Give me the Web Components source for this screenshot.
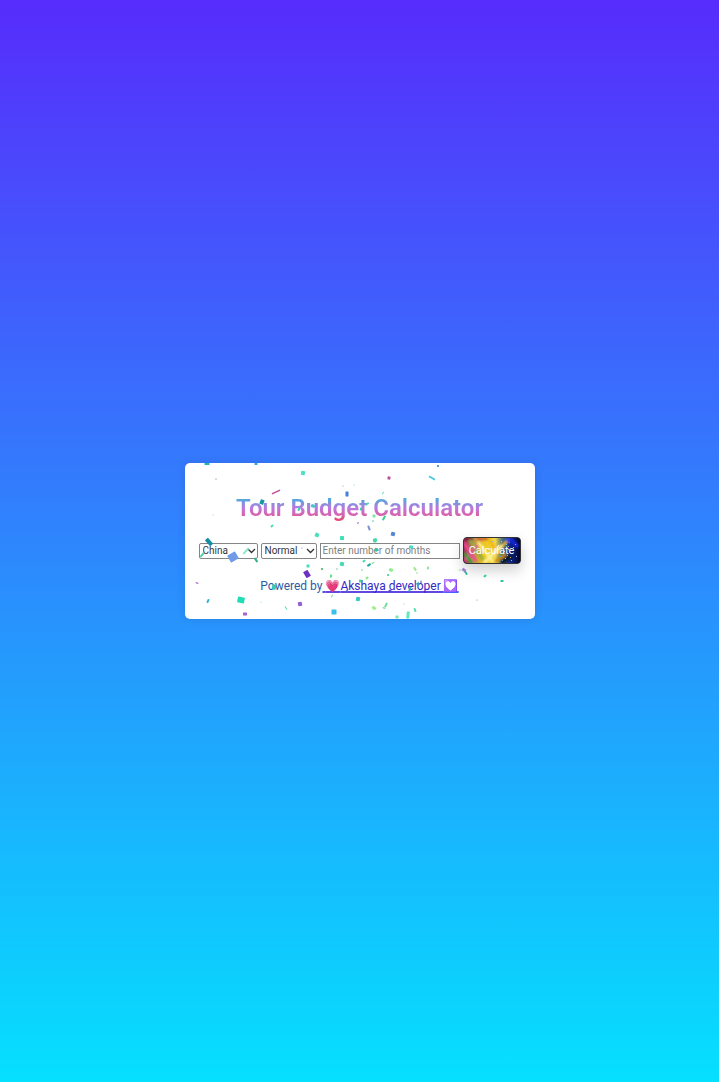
<!DOCTYPE html>
<html lang="en">
<head>
<meta charset="utf-8">
<meta name="viewport" content="width=device-width, initial-scale=1">
<title>Tour Budget Calculator</title>
<style>
html { height: 100%; }
body { margin: 0; min-height: 100%; display: flex; align-items: center; justify-content: center; background: linear-gradient(#572cfc, #05e0fe); font-family: Roboto, "Liberation Sans", sans-serif; }
</style>
</head>
<body>
<tour-card>
  <tour-title slot="title">Tour Budget Calculator</tour-title>
  <tour-form></tour-form>
  <tour-credit slot="footer"></tour-credit>
</tour-card>
<script>
const define = (name, html, setup) => customElements.define(name, class extends HTMLElement {
  constructor() {
    super();
    this.attachShadow({ mode: "open" }).innerHTML = html;
    if (setup) setup(this.shadowRoot);
  }
});

define("tour-title", `
<style>
:host { display: block; }
h1 { margin: 0; font-size: 24px; line-height: 28px; font-weight: 600; text-align: center; color: transparent; background: linear-gradient(#1fc0f2 0%, #5ba4dc 22%, #bd78e0 50%, #d663ae 75%, #e8405c 100%); -webkit-background-clip: text; background-clip: text; }
</style>
<h1><slot></slot></h1>`);

define("tour-form", `
<style>
:host { display: block; }
form { display: flex; align-items: center; justify-content: center; gap: 3px; margin: 0; }
select, input { box-sizing: border-box; margin: 0; font: 10px/13px Roboto, sans-serif; border: 1px solid #858585; background: #fff; height: 16px; }
.pick { display: flex; position: relative; }
select { appearance: none; width: 56px; padding: 0 12px 0 3px; color: #333; border-radius: 2px; }
.pick.wide select { width: 59px; }
.pick svg { position: absolute; right: 2px; top: 5px; width: 9px; height: 6px; pointer-events: none; }
input { width: 140px; padding: 0 2px; border-radius: 0; }
input::placeholder { color: #808080; opacity: 1; }
button { position: relative; overflow: visible; box-sizing: border-box; width: 58px; height: 27px; margin: 0; padding: 0; border: 1px solid #333; border-radius: 4px; font: 11px/13px Roboto, sans-serif; color: #fff; background: #060b40; box-shadow: 0 6px 14px rgba(0,0,0,.2); }
button svg { position: absolute; inset: 0; width: 100%; height: 100%; border-radius: 3px; }
button span { position: relative; }
</style>
<form>
  <span class="pick wide"><select aria-label="Country"><option>China</option></select><svg viewBox="0 0 9 6"><path d="M1 1l3.5 3.5L8 1" fill="none" stroke="#333" stroke-width="1.3"/></svg></span>
  <span class="pick"><select aria-label="Travel style"><option>Normal</option></select><svg viewBox="0 0 9 6"><path d="M1 1l3.5 3.5L8 1" fill="none" stroke="#333" stroke-width="1.3"/></svg></span>
  <input type="text" aria-label="Number of months" placeholder="Enter number of months">
  <button type="button">
    <svg viewBox="0 0 56 25" preserveAspectRatio="none" aria-hidden="true">
      <defs>
        <linearGradient id="g"><stop offset="0" stop-color="#a42a5c"/><stop offset=".16" stop-color="#b98a4c"/><stop offset=".34" stop-color="#e9c51c"/><stop offset=".56" stop-color="#f1d548"/><stop offset=".68" stop-color="#49717c"/><stop offset=".8" stop-color="#102b9c"/><stop offset="1" stop-color="#020528"/></linearGradient>
        <filter id="b"><feGaussianBlur stdDeviation="1"/></filter>
      </defs>
      <rect width="56" height="25" fill="url(#g)"/>
      <g filter="url(#b)" fill="none" stroke-width="2">
        <path d="M0 1h9" stroke="#7c1634" stroke-width="3"/><path d="M0 5L12 23" stroke="#f04a98" stroke-width="3"/><path d="M6 2L19 22" stroke="#8db040" stroke-width="3"/><path d="M0 23L17 3" stroke="#e84b9c"/><path d="M0 15L8 25" stroke="#3aa536" stroke-width="3"/><path d="M14 4L29 24" stroke="#fff17d" stroke-width="3"/><path d="M24 0L33 14L44 2" stroke="#f5b512" stroke-width="3"/><path d="M20 25L38 7" stroke="#fff4a0" stroke-width="3"/><path d="M13 1h11" stroke="#c2452c"/><path d="M31 24L42 16" stroke="#c98a0c" stroke-width="3"/><path d="M37 25L47 18" stroke="#09172b" stroke-width="5"/><path d="M42 2h7" stroke="#3850d8" stroke-width="4"/><path d="M46 1L54 9" stroke="#1320d8" stroke-width="4"/>
      </g>
      <g class="sparks"></g>
    </svg>
    <span>Calculate</span>
  </button>
</form>`, root => {
  const sparks = [[31,4],[34,7],[37,3],[39,9],[42,6],[40,13],[44,11],[45,4],[43,17],[41,20],[46,19],[36,18],[48,15],[49,9],[47,22],[38,22],[51,6],[52,18],[44,8],[28,3]];
  const tints = ["#6df5ef", "#fff", "#ffe94f", "#4eabff"];
  root.querySelector(".sparks").innerHTML = sparks.map(([x, y], i) =>
    `<rect x="${x}" y="${y}" width="1" height="1" fill="${tints[i % 4]}" opacity=".75"/>`).join("");
});

define("tour-credit", `
<style>
:host { display: block; }
p { margin: 0; font-size: 12px; line-height: 16px; text-align: center; color: #2c5ba4; }
a { color: #3428c0; text-decoration: underline 2px #6048e0; text-decoration-skip-ink: none; white-space: pre; }
.emoji { font-family: "Noto Color Emoji", Roboto, sans-serif; }
.pale { filter: hue-rotate(-25deg) brightness(1.3); }
</style>
<p>Powered by<a href="#"> <span class="emoji">💗</span>Akshaya developer <span class="emoji pale">💟</span></a></p>`);

define("confetti-layer", `
<style>
:host { display: block; position: absolute; inset: 0; overflow: hidden; border-radius: inherit; pointer-events: none; }
svg { display: block; width: 100%; height: 100%; }
</style>
<svg viewBox="185 463 350 156" aria-hidden="true"></svg>`, root => {
  // x, y, width, height, rotation, colour
  const pieces = [
    [207,464,5,2,0,"#24b5b5"],[256,464,3,2,0,"#35a9e8"],[216,479,1,1,0,"#444"],[276,492,9,1.5,-25,"#c04c96"],[262,502,4,5,20,"#1699a6"],[272,526,3,2,-40,"#45dcae"],
    [303,473,4,4,10,"#4fe0c4"],[389,478,3,3,10,"#bf4f98"],[347,494,3,5,0,"#4380d8"],[343,486,1,1,0,"#7b66c8"],[354,485,1,1,0,"#56dca8"],[383,493,1,3,25,"#59dfa4"],
    [432,478,7,2,30,"#4cc8dc"],[438,466,2,2,0,"#4a9ada"],[299,509,2,4,20,"#43cbb8"],[313,506,4,3,20,"#48c5d3"],[361,509,2,3,20,"#36cca2"],[367,504,4,2,-30,"#4bd0bd"],
    [374,516,3,3,0,"#80e5a6"],[384,518,2,5,30,"#3ecf91"],[373,521,2,1,0,"#3fc99b"],[358,523,2,1,-30,"#9050bd"],[369,528,2,5,-20,"#7d91d6"],[317,535,4,4,20,"#49dfbf"],[342,538,4,4,0,"#43dfb8"],[375,540,4,3,-20,"#42dba6"],[393,534,4,4,15,"#5485d0"],
    [209,542,4,8,-42,"#148fa5"],[233,557,9,8,-30,"#719be7"],[202,555,2,5,40,"#4bd2a2"],[246,551,2,8,42,"#8ce8c2"],[256,560,2,5,-35,"#2db28d"],[197,583,3,1,20,"#9b4fb8"],[208,601,2,4,25,"#2eb0cf"],[241,600,7,6,12,"#21ddb4"],[245,614,4,3,0,"#aa61d2"],[261,602,1,1,0,"#4cd7b0"],[286,608,1,4,-35,"#55d9a5"],
    [274,587,4,5,10,"#3bc7b4"],[302,548,1,1,0,"#6653c8"],[375,541,3,3,0,"#49d2aa"],[376,550,3,3,15,"#36c8a5"],[342,564,4,4,15,"#42d8b4"],[308,566,3,3,0,"#48dbbd"],[307,574,5,7,-30,"#6d31c0"],[322,569,2,2,-30,"#53ac68"],[331,576,2,3,10,"#57e484"],[337,569,1,2,0,"#70d1ae"],[364,561,3,2,-30,"#43d4a4"],[362,570,1,2,0,"#70d989"],[369,565,4,2,-35,"#1eac9c"],[373,563,3,1,-25,"#77dc92"],[367,578,3,2,-35,"#8ee782"],[360,581,2,3,0,"#54d695"],[391,570,4,3,20,"#92ec96"],[388,575,2,2,0,"#5bd8a5"],
    [300,604,4,4,-10,"#905fd4"],[334,612,5,5,0,"#3dbfeb"],[332,596,1,3,20,"#5fdf95"],[358,599,4,4,10,"#3ac8c9"],[374,608,4,3,35,"#9cec87"],[386,605,2,5,25,"#70dda1"],[384,608,3,1,20,"#68cb91"],[397,617,3,3,0,"#80e6ad"],[408,615,3,7,5,"#60e8c1"],[415,610,2,4,-20,"#57dfb0"],[404,604,1,1,0,"#65cda0"],[347,591,2,2,20,"#5d63d7"],[410,589,2,5,20,"#35b5ad"],[418,584,3,3,-30,"#3aa7b6"],[421,582,1,3,0,"#5d3fc7"],[390,591,3,2,10,"#5549d1"],
    [411,547,4,3,10,"#48dac0"],[415,569,2,4,-30,"#a0e68b"],[417,573,2,1,0,"#8fdf72"],[428,568,2,3,15,"#8ae4a3"],[464,570,4,3,35,"#a27bd5"],[466,573,2,4,-35,"#2db997"],[460,570,3,1,0,"#8ae2a1"],[485,576,3,2,-35,"#34d1a8"],[502,581,3,2,0,"#2dc6a5"],[477,600,1,1,0,"#b14b70"],[213,515,1,1,0,"#aaa"]
  ];
  root.querySelector("svg").innerHTML = pieces.map(([x, y, w, h, r, c]) =>
    `<rect x="${x - w / 2}" y="${y - h / 2}" width="${w}" height="${h}" rx=".5" fill="${c}" transform="rotate(${r} ${x} ${y})"/>`).join("");
});

define("tour-card", `
<style>
:host { display: block; position: relative; box-sizing: border-box; width: 350px; max-width: 100%; padding: 31px 14px 25px; border-radius: 5px; background: #fff; box-shadow: 0 0 10px rgba(0,0,0,.1); }
main { display: flex; flex-direction: column; }
.row { margin: 15px 0 14px; }
</style>
<main><slot name="title"></slot><div class="row"><slot></slot></div><slot name="footer"></slot></main>
<confetti-layer></confetti-layer>`);
</script>
</body>
</html>
